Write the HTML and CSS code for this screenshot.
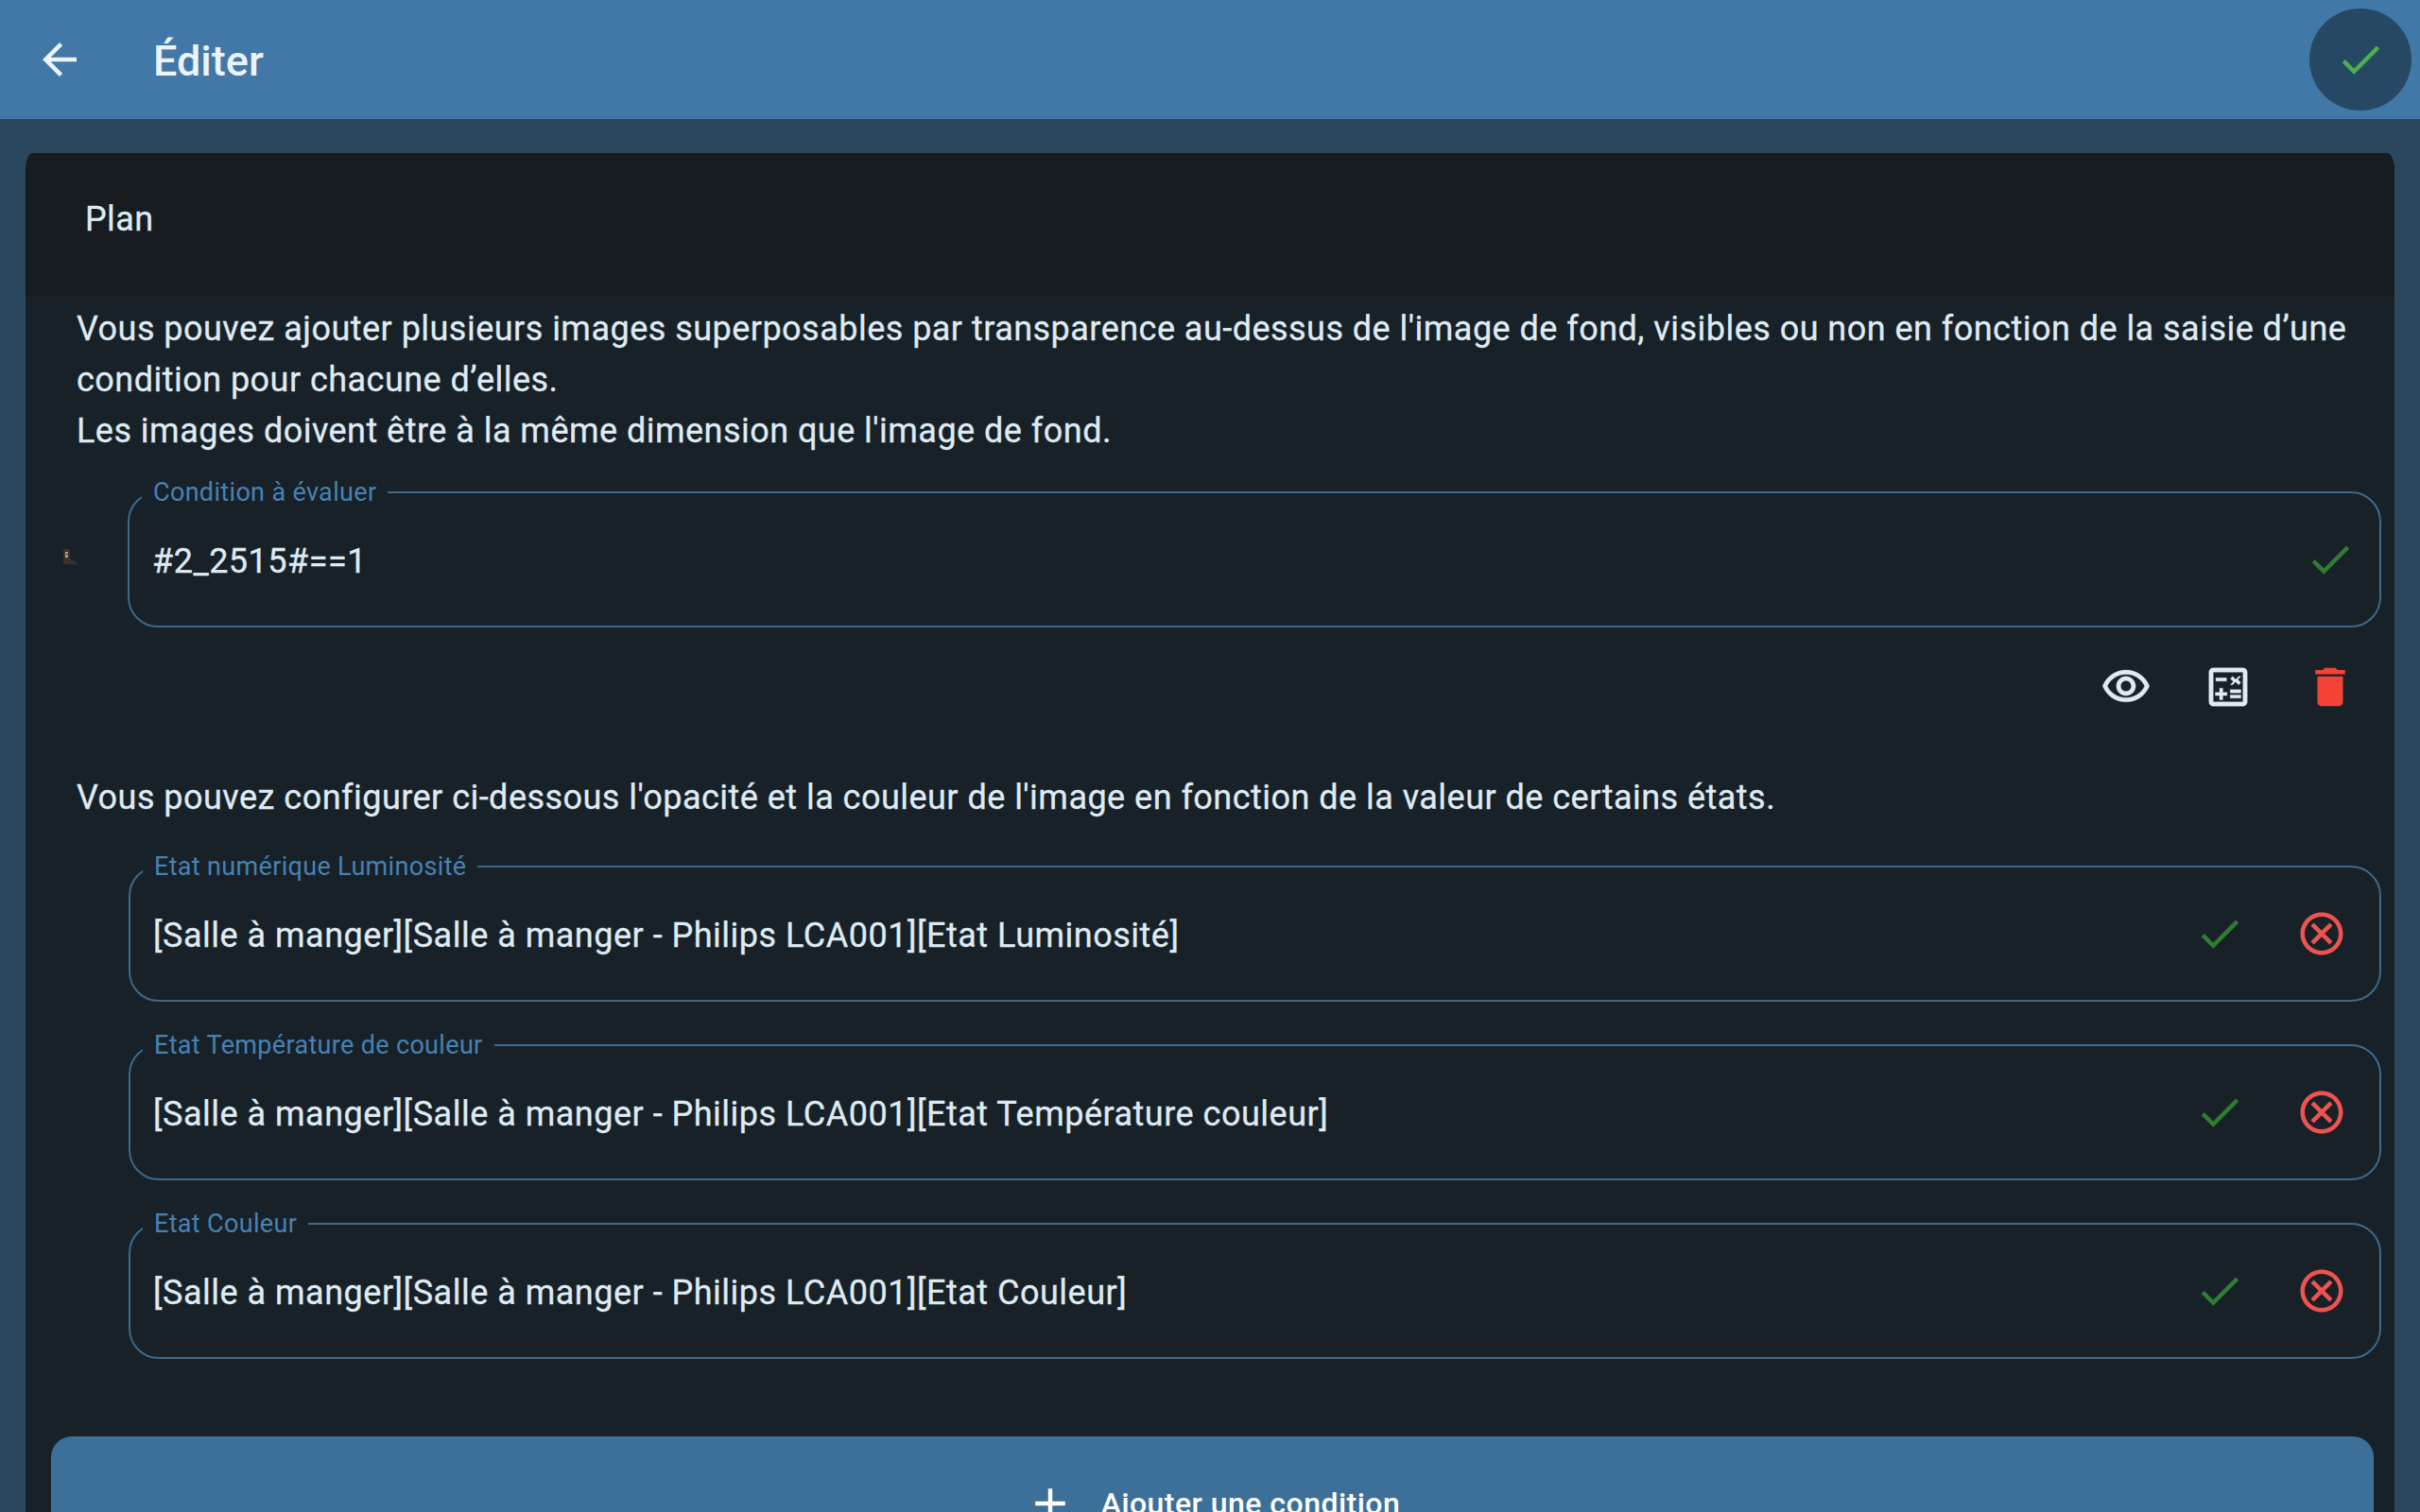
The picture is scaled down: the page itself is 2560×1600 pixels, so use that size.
FILE: index.html
```html
<!DOCTYPE html>
<html lang="fr">
<head>
<meta charset="utf-8">
<title>Éditer</title>
<link rel="stylesheet" href="styles.css">
</head>
<body>
<header class="topbar">
  <button class="back" aria-label="Retour"><svg class="icon" viewBox="0 0 24 24"><path d="M20 11H7.83l5.59-5.59L12 4l-8 8 8 8 1.41-1.41L7.83 13H20v-2z"/></svg></button>
  <h1 class="title">Éditer</h1>
  <button class="fab" aria-label="Valider"><svg class="icon" viewBox="0 0 24 24"><path d="M9 16.17L4.83 12l-1.42 1.41L9 19 21 7l-1.41-1.41z"/></svg></button>
</header>
<main class="page">
  <section class="card">
    <div class="card-head">Plan</div>
    <div class="card-body">
      <p class="para">Vous pouvez ajouter plusieurs images superposables par transparence au-dessus de l'image de fond, visibles ou non en fonction de la saisie d’une condition pour chacune d’elles.<br>Les images doivent être à la même dimension que l'image de fond.</p>
      <div class="cond-row">
        <svg class="thumb" viewBox="0 0 20 18"><rect x="1" y="0" width="7" height="16" fill="#3a3226"/><rect x="3" y="3" width="3" height="6" fill="#b3a060"/><rect x="4" y="5" width="2" height="1" fill="#2a2418"/><path d="M8 10l10 6-10 1z" fill="#2b3138"/></svg>
        <fieldset class="field">
          <legend class="legend">Condition à évaluer</legend>
          <div class="field-inner">
            <span class="value">#2_2515#==1</span>
            <span class="field-icons single-icon">
              <svg class="icon ok" viewBox="0 0 24 24"><path d="M9 16.17L4.83 12l-1.42 1.41L9 19 21 7l-1.41-1.41z"/></svg>
            </span>
          </div>
        </fieldset>
      </div>
      <div class="actions">
        <svg class="icon plain" viewBox="0 0 24 24"><path d="M12 6c3.79 0 7.17 2.13 8.82 5.5C19.17 14.87 15.79 17 12 17s-7.17-2.13-8.82-5.5C4.83 8.13 8.21 6 12 6m0-2C7 4 2.73 7.11 1 11.5 2.73 15.89 7 19 12 19s9.27-3.11 11-7.5C21.27 7.11 17 4 12 4zm0 5c1.38 0 2.5 1.12 2.5 2.5S13.38 14 12 14s-2.5-1.12-2.5-2.5S10.62 9 12 9m0-2c-2.48 0-4.5 2.02-4.5 4.5S9.52 16 12 16s4.5-2.02 4.5-4.5S14.48 7 12 7z"/></svg>
        <svg class="icon plain" viewBox="0 0 24 24"><path d="M19 3H5c-1.1 0-2 .9-2 2v14c0 1.1.9 2 2 2h14c1.1 0 2-.9 2-2V5c0-1.1-.9-2-2-2zm0 16H5V5h14v14z"/><path d="M6.25 7.72h5v1.5h-5zM13 15.75h5v1.5h-5zM13 13.25h5v1.5h-5zM8 18h1.5v-2h2v-1.5h-2v-2H8v2H6V16h2zM14.09 10.95l1.41-1.41 1.41 1.41 1.06-1.06-1.41-1.42 1.41-1.41L16.97 7l-1.41 1.41L14.15 7l-1.06 1.06 1.41 1.41-1.41 1.42z"/></svg>
        <svg class="icon trash" viewBox="0 0 24 24"><path d="M6 19c0 1.1.9 2 2 2h8c1.1 0 2-.9 2-2V7H6v12zM19 4h-3.5l-1-1h-5l-1 1H5v2h14V4z"/></svg>
      </div>
      <p class="para single">Vous pouvez configurer ci-dessous l'opacité et la couleur de l'image en fonction de la valeur de certains états.</p>
      <div class="state-list">
        <fieldset class="field">
          <legend class="legend">Etat numérique Luminosité</legend>
          <div class="field-inner">
            <span class="value">[Salle à manger][Salle à manger - Philips LCA001][Etat Luminosité]</span>
            <span class="field-icons">
              <svg class="icon ok" viewBox="0 0 24 24"><path d="M9 16.17L4.83 12l-1.42 1.41L9 19 21 7l-1.41-1.41z"/></svg>
              <svg class="icon clear" viewBox="0 0 24 24"><path d="M17.1 8.3L15.7 6.9 12 10.6 8.3 6.9 6.9 8.3 10.6 12 6.9 15.7 8.3 17.1 12 13.4 15.7 17.1 17.1 15.7 13.4 12zM12 2C6.47 2 2 6.47 2 12s4.47 10 10 10 10-4.47 10-10S17.53 2 12 2zm0 18c-4.41 0-8-3.59-8-8s3.59-8 8-8 8 3.59 8 8-3.59 8-8 8z"/></svg>
            </span>
          </div>
        </fieldset>
        <fieldset class="field">
          <legend class="legend">Etat Température de couleur</legend>
          <div class="field-inner">
            <span class="value">[Salle à manger][Salle à manger - Philips LCA001][Etat Température couleur]</span>
            <span class="field-icons">
              <svg class="icon ok" viewBox="0 0 24 24"><path d="M9 16.17L4.83 12l-1.42 1.41L9 19 21 7l-1.41-1.41z"/></svg>
              <svg class="icon clear" viewBox="0 0 24 24"><path d="M17.1 8.3L15.7 6.9 12 10.6 8.3 6.9 6.9 8.3 10.6 12 6.9 15.7 8.3 17.1 12 13.4 15.7 17.1 17.1 15.7 13.4 12zM12 2C6.47 2 2 6.47 2 12s4.47 10 10 10 10-4.47 10-10S17.53 2 12 2zm0 18c-4.41 0-8-3.59-8-8s3.59-8 8-8 8 3.59 8 8-3.59 8-8 8z"/></svg>
            </span>
          </div>
        </fieldset>
        <fieldset class="field">
          <legend class="legend">Etat Couleur</legend>
          <div class="field-inner">
            <span class="value">[Salle à manger][Salle à manger - Philips LCA001][Etat Couleur]</span>
            <span class="field-icons">
              <svg class="icon ok" viewBox="0 0 24 24"><path d="M9 16.17L4.83 12l-1.42 1.41L9 19 21 7l-1.41-1.41z"/></svg>
              <svg class="icon clear" viewBox="0 0 24 24"><path d="M17.1 8.3L15.7 6.9 12 10.6 8.3 6.9 6.9 8.3 10.6 12 6.9 15.7 8.3 17.1 12 13.4 15.7 17.1 17.1 15.7 13.4 12zM12 2C6.47 2 2 6.47 2 12s4.47 10 10 10 10-4.47 10-10S17.53 2 12 2zm0 18c-4.41 0-8-3.59-8-8s3.59-8 8-8 8 3.59 8 8-3.59 8-8 8z"/></svg>
            </span>
          </div>
        </fieldset>
      </div>
      <button class="add"><svg class="icon" viewBox="0 0 24 24"><path d="M19 13h-6v6h-2v-6H5v-2h6V5h2v6h6v2z"/></svg><span class="add-label">Ajouter une condition</span></button>
    </div>
  </section>
</main>
</body>
</html>
```

FILE: styles.css
```css
* { box-sizing: border-box; }
html, body { margin: 0; height: 1600px; overflow: hidden; }
body { background: #2a475e; color: #dfeaf3; font-family: Roboto, "Liberation Sans", sans-serif; font-size: 36px; font-weight: 400; letter-spacing: 0.47px; -webkit-text-stroke: 0.3px currentColor; }
button { font-family: inherit; border: 0; background: none; color: inherit; padding: 0; letter-spacing: inherit; }
.icon { display: block; width: 54px; height: 54px; fill: currentColor; flex: none; }

.topbar { height: 126px; background: #4178a8; display: flex; align-items: center; padding: 0 9px 0 36px; color: #ecf3fa; }
.back { width: 54px; height: 54px; }
.title { margin: 2px 0 0 72px; font-size: 45px; font-weight: 500; flex: 1; letter-spacing: 0; -webkit-text-stroke: 0; }
.fab { width: 108px; height: 108px; border-radius: 50%; background: #264864; color: #4caf50; display: flex; align-items: center; justify-content: center; }

.page { padding: 36px 27px 0; }
.card { background: #182127; border-radius: 8px 8px 0 0 / 18px 18px 0 0; overflow: hidden; height: 1500px; }
.card-head { height: 151px; background: #161c1f; padding: 0 0 12px 63px; display: flex; align-items: center; line-height: 54px; letter-spacing: 0.4px; }
.card-body { padding: 8px 14px 0 27px; }
.para { margin: 0 0 0 27px; line-height: 54px; }
.single { margin-top: 37px; }

.cond-row { display: flex; align-items: center; margin-top: 22px; }
.thumb { width: 20px; height: 18px; margin: 11px 49px 0 12px; flex: none; }
.cond-row .field { flex: 1; }

.field { margin: 0; padding: 0; min-width: 0; height: 159px; border: 2px solid #3b6a90; border-radius: 32px; }
.field-inner { height: 113px; display: flex; align-items: center; justify-content: space-between; padding: 0 25px 0 24px; }
.legend { font-size: 27px; line-height: 32px; color: #4682b4; padding: 0 12px; margin-left: 13px; letter-spacing: 0.33px; -webkit-text-stroke: 0; }
.value { line-height: 54px; white-space: nowrap; letter-spacing: 0.5px; }
.field-icons { display: flex; gap: 54px; margin: 0 9px 3px 0; }
.single-icon { margin-right: 0; }
.ok { color: #2e7d32; }
.clear { color: #ef5350; }
.plain { color: #dfeaf3; stroke: currentColor; stroke-width: 0.15; }
.trash { color: #f44336; }

.actions { display: flex; justify-content: flex-end; gap: 54px; padding: 36px 27px 0 0; height: 116px; }
.state-list { display: flex; flex-direction: column; gap: 30px; margin: 30px 0 0 82px; }

.add { width: 2457px; height: 160px; margin-top: 82px; background: #3c7098; border-radius: 22px; color: #fff; font-size: 32px; font-weight: 500; -webkit-text-stroke: 0; display: flex; align-items: flex-start; justify-content: center; gap: 27px; padding-top: 44px; }
.add-label { line-height: 54px; }
```
